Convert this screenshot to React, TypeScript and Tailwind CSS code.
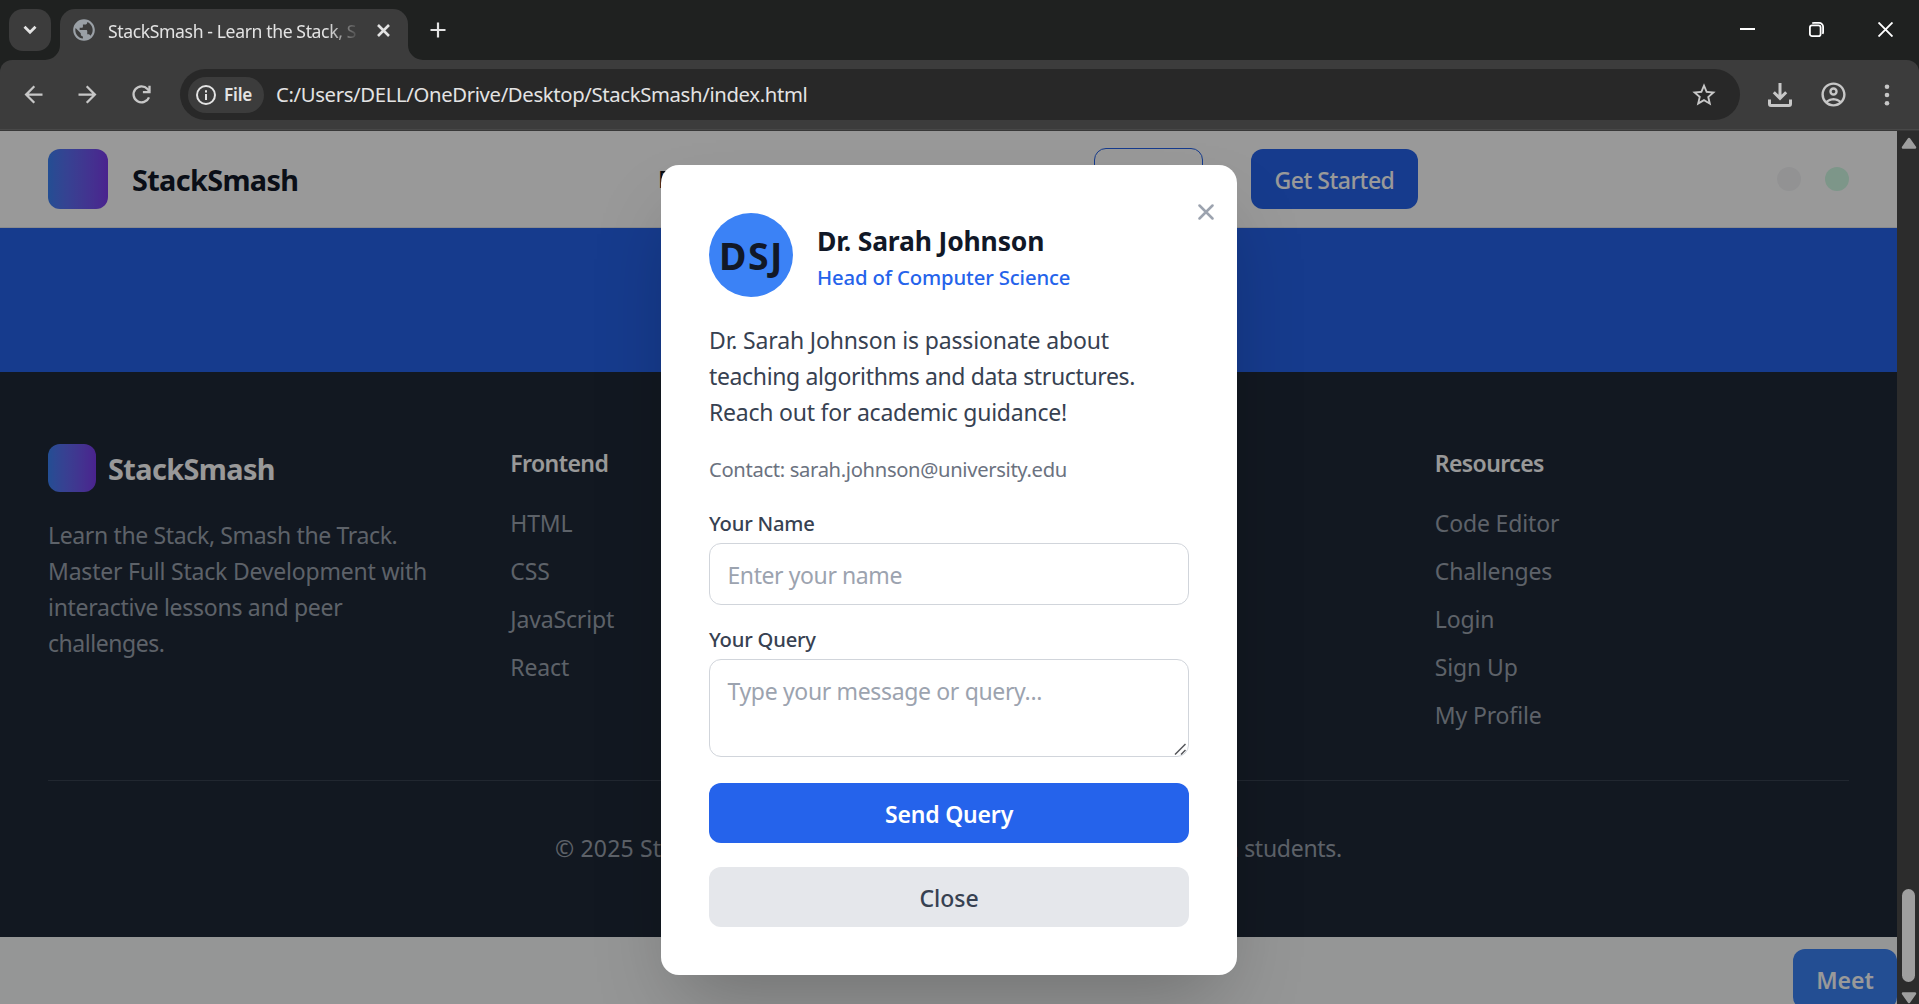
import type { ReactNode } from 'react';
import { MdArrowBack, MdArrowForward, MdOutlineAccountCircle, MdPublic, MdStarBorder } from 'react-icons/md';

function TabStrip() {
  return (
    <div className="flex h-[60px] shrink-0 bg-[#1f2120] text-[#e3e3e3]">
      <button className="mt-[9px] ml-[9px] flex size-[42px] items-center justify-center rounded-[14px] bg-[#3c3c3c]">
        <svg width="14" height="10" viewBox="0 0 14 10" fill="none" stroke="currentColor" strokeWidth="2.8">
          <path d="M1.5 1.8 7 7.2l5.500-5.400" />
        </svg>
      </button>
      <div className="relative mt-[9px] ml-[9px] flex h-[51px] w-[348px] items-center rounded-t-[15px] bg-[#3c3c3c]">
        <svg className="absolute bottom-0 -left-[15px]" width="15" height="15" fill="#3c3c3c">
          <path d="M15 0v15H0A15 15 0 0 0 15 0z" />
        </svg>
        <svg className="absolute -right-[15px] bottom-0" width="15" height="15" fill="#3c3c3c">
          <path d="M0 0v15h15A15 15 0 0 1 0 0z" />
        </svg>
        <MdPublic className="mb-[9px] ml-[11px] size-[26px] text-[#9aa0a6]" />
        <span className="mb-[6px] ml-[11px] w-[250px] text-[17.600px] tracking-[-0.022em] whitespace-nowrap [mask-image:linear-gradient(to_right,black_220px,transparent_252px)]">
          StackSmash - Learn the Stack, S
        </span>
        <svg className="mb-[9px] ml-[19px]" width="13" height="13" viewBox="0 0 13 13" stroke="currentColor" strokeWidth="2.6">
          <path d="m1 1 11 11M12 1 1 12" />
        </svg>
      </div>
      <svg className="mt-[22px] ml-[22px]" width="16" height="16" stroke="currentColor" strokeWidth="2.200">
        <path d="M8 .5v15M.5 8h15" />
      </svg>
      <div className="mt-[22px] mr-[26px] ml-auto flex gap-[54px] text-white">
        <svg width="15" height="15" fill="currentColor">
          <path d="M0 6h15v2H0z" />
        </svg>
        <svg width="15" height="15" fill="none" stroke="currentColor" strokeWidth="1.800">
          <rect x=".9" y="3.400" width="10.700" height="10.700" rx="2.200" />
          <path d="M3.200 1.300Q4 .9 5 .9h5.200a3.900 3.900 0 0 1 3.900 3.900V10q0 1-.5 1.900" />
        </svg>
        <svg width="15" height="15" stroke="currentColor" strokeWidth="1.900">
          <path d="m.5.5 14 14M14.500.5l-14 14" />
        </svg>
      </div>
    </div>
  );
}

function Toolbar() {
  return (
    <div className="h-[71px] shrink-0 bg-[#1f2120]">
      <div className="flex h-full items-start rounded-t-[12px] border-b border-[#383838] bg-[#3c3c3c] text-[#c7c7c7]">
        <div className="flex h-[70px] w-full items-start border-b border-[#484848] pt-[9px]">
          <div className="flex h-[51px] items-center gap-[27px] pl-[19.500px]">
            <MdArrowBack className="size-[27px]" />
            <MdArrowForward className="size-[27px]" />
            {/* Reload: open ring with a square-cornered arrow head */}
            <svg width="27" height="27" viewBox="0 0 27 27" fill="none" stroke="currentColor" strokeWidth="2.300">
              <path d="M21 16.300A8 8 0 1 1 19.500 8l2 2.200" />
              <path d="M21.500 4.700v6.500h-6.600" />
            </svg>
          </div>
          <div className="ml-[25.500px] flex h-[51px] w-[1560px] items-center rounded-full bg-[#282828] pr-[22px] pl-2 text-[#e3e3e3]">
            <div className="flex h-9 w-[76px] items-center rounded-full bg-[#3c3c3c] pl-2">
              <svg width="20" height="20" fill="none" stroke="currentColor" strokeWidth="2">
                <circle cx="10" cy="10" r="9" />
                <path d="M10 9v6M10 5.200v2.200" />
              </svg>
              <span className="ml-2 text-[17.100px] leading-[22px] font-semibold tracking-[-0.01em]">File</span>
            </div>
            <span className="ml-[12px] text-[20.300px] tracking-[-0.017em]">
              C:/Users/DELL/OneDrive/Desktop/StackSmash/index.html
            </span>
            <MdStarBorder className="ml-auto size-[28px] text-[#c7c7c7]" />
          </div>
          <div className="ml-7 flex h-[51px] items-center">
            <svg width="24" height="24" fill="none" stroke="currentColor" strokeWidth="3">
              <path d="M12 0v15M5.800 9.200 12 15.300l6.200-6.100M1.500 16.500v4.500q0 1.500 1.500 1.500h18q1.500 0 1.500-1.500v-4.500" />
            </svg>
            <MdOutlineAccountCircle className="ml-[26.500px] size-[29px]" />
            <svg className="ml-[36.500px]" width="6" height="22" fill="currentColor">
              <circle cx="3" cy="2.700" r="2.300" />
              <circle cx="3" cy="11" r="2.300" />
              <circle cx="3" cy="19.300" r="2.300" />
            </svg>
          </div>
        </div>
      </div>
    </div>
  );
}

function SiteHeader() {
  return (
    <header className="flex h-[97px] shrink-0 items-center border-b border-gray-200 bg-white px-12">
      <div className="size-[60px] rounded-xl bg-linear-to-r from-[#3b82f6] to-[#7c3aed]" />
      <span className="ml-6 w-[526px] pt-[2px] text-[28.800px] font-bold tracking-[-0.022em] text-[#111827]">StackSmash</span>
      <nav className="w-[388px] pt-px text-[23.200px] font-medium text-[#111827]">Features</nav>
      <div className="ml-12 h-[63px] w-[109px] rounded-xl border border-[#2563eb]" />
      <button className="ml-12 h-[60px] w-[167px] rounded-xl bg-[#2563eb] pt-[3px] text-[23px] font-medium tracking-[-0.022em] text-white">
        Get Started
      </button>
      <div className="ml-auto flex gap-6">
        <span className="size-6 rounded-full bg-[#f3f4f6]" />
        <span className="size-6 rounded-full bg-[#d1fae5]" />
      </div>
    </header>
  );
}

function LinkColumn({ title, links }: { title: string; links: string[] }) {
  return (
    <div className="pt-px">
      <h4 className="text-[23px] leading-9 font-semibold tracking-[-0.025em] text-white">{title}</h4>
      <ul className="mt-6 space-y-3 text-[23px] leading-9 tracking-[-0.006em]">
        {links.map((link) => (
          <li key={link}>{link}</li>
        ))}
      </ul>
    </div>
  );
}

function SiteFooter() {
  return (
    <footer className="h-[565px] shrink-0 bg-[#1f2937] px-12 pt-[72px] text-[#9ca3af]">
      <div className="grid h-[336px] grid-cols-4 gap-12">
        <div>
          <div className="flex h-12 items-center gap-3">
            <div className="size-12 rounded-xl bg-linear-to-r from-[#3b82f6] to-[#7c3aed]" />
            <span className="pt-[2px] text-[28.800px] font-bold tracking-[-0.020em] text-white">StackSmash</span>
          </div>
          <p className="mt-[25px] text-[23px] leading-9">
            <span className="block tracking-[-0.0155em]">Learn the Stack, Smash the Track.</span>
            <span className="block tracking-[-0.009em]">Master Full Stack Development with</span>
            <span className="block tracking-[-0.012em]">interactive lessons and peer</span>
            <span className="block tracking-[-0.020em]">challenges.</span>
          </p>
        </div>
        <LinkColumn title="Frontend" links={['HTML', 'CSS', 'JavaScript', 'React']} />
        <div />
        <LinkColumn title="Resources" links={['Code Editor', 'Challenges', 'Login', 'Sign Up', 'My Profile']} />
      </div>
      <div className="border-t border-[#374151] pt-[49px]">
        <div className="mx-auto flex w-[787px] justify-between text-[23px] leading-9 tracking-[-0.012em]">
          <span className="tracking-[0.008em]">© 2025 StackSmash.</span>
          <span>Built by and for Indian students.</span>
        </div>
      </div>
    </footer>
  );
}

function Field({ label, className, children }: { label: string; className: string; children: ReactNode }) {
  return (
    <label className={className}>
      <span className="block text-[20.200px] leading-[30px] font-medium tracking-[-0.010em] text-[#374151]">{label}</span>
      {children}
    </label>
  );
}

function ContactDialog() {
  return (
    <div className="absolute inset-x-0 top-0 -bottom-[5px] flex items-center justify-center bg-black/40">
      <div className="relative ml-px h-[810px] w-[576px] rounded-[18px] bg-white p-12 text-[#111827] shadow-[0_37.5px_75px_-18px_rgba(0,0,0,0.250)]">
        <svg className="absolute top-[38.500px] right-[23px]" width="16" height="16" stroke="#9ca3af" strokeWidth="2.500" strokeLinecap="round">
          <path d="m1.500 1.500 13 13M14.500 1.500l-13 13" />
        </svg>
        <div className="flex h-[84px] gap-6">
          <div className="flex size-[84px] items-center justify-center rounded-full bg-[#3b82f6] pt-[2px] pl-px text-[37.500px] font-bold tracking-[0.040em]">
            DSJ
          </div>
          <div className="pt-[10px]">
            <h3 className="text-[26.500px] leading-9 font-bold tracking-[-0.006em]">Dr. Sarah Johnson</h3>
            <p className="pt-px text-[20.300px] leading-[35px] font-medium tracking-[-0.007em] text-[#2563eb]">Head of Computer Science</p>
          </div>
        </div>
        <p className="mt-[25px] text-[23px] leading-9 text-[#374151]">
          <span className="block tracking-[-0.007em]">Dr. Sarah Johnson is passionate about</span>
          <span className="block tracking-[-0.0155em]">teaching algorithms and data structures.</span>
          <span className="block tracking-[-0.010em]">Reach out for academic guidance!</span>
        </p>
        <p className="mt-6 text-[20.200px] leading-[30px] tracking-[-0.0165em] text-[#6b7280]">
          Contact: sarah.johnson@university.edu
        </p>
        <Field label="Your Name" className="mt-6 block">
          <span className="mt-[5px] flex h-[62px] items-center rounded-xl border border-[#d1d5db] pt-[2px] pl-[17.500px] text-[23px] tracking-[-0.018em] text-[#9ca3af]">
            Enter your name
          </span>
        </Field>
        <Field label="Your Query" className="mt-[19px] block">
          <span className="relative mt-[5px] block h-[98px] rounded-xl border border-[#d1d5db] pt-[13px] pl-[17.500px] text-[23px] leading-9 tracking-[-0.015em] text-[#9ca3af]">
            Type your message or query...
            <svg className="absolute right-[2px] bottom-px" width="12" height="12" stroke="#55575b" strokeWidth="1.500">
              <path d="M1 11.500 11.500 1M7 11.500l4.500-4.500" />
            </svg>
          </span>
        </Field>
        <button className="mt-[26px] block h-[60px] w-full rounded-xl bg-[#2563eb] pt-[2px] text-[23px] font-semibold tracking-[-0.008em] text-white">
          Send Query
        </button>
        <button className="mt-6 block h-[60px] w-full rounded-xl bg-[#e5e7eb] pt-[2px] text-[23px] font-medium text-[#374151]">
          Close
        </button>
      </div>
    </div>
  );
}

function Scrollbar() {
  return (
    <div className="flex w-[22px] shrink-0 flex-col items-center bg-[#2c2c2c] pt-[6px] text-[#9f9f9f]">
      <svg className="ml-px" width="16" height="12" fill="currentColor" stroke="currentColor" strokeWidth="2.500" strokeLinejoin="round">
        <path d="M8 2 14 10.500H2z" />
      </svg>
      <div className="mt-[740px] ml-px h-[93px] w-[13px] shrink-0 rounded-full bg-[#9f9f9f]" />
      <svg className="mt-[10px] ml-px" width="16" height="12" fill="currentColor" stroke="currentColor" strokeWidth="2.500" strokeLinejoin="round">
        <path d="M8 10 14 1.500H2z" />
      </svg>
    </div>
  );
}

export default function App() {
  return (
    <div className="flex h-[1004px] w-[1919px] flex-col overflow-hidden font-['Noto_Sans','Open_Sans',sans-serif]">
      <TabStrip />
      <Toolbar />
      <div className="flex h-[873px]">
        <main className="relative flex h-full w-[1897px] flex-col overflow-hidden bg-[#f9fafb]">
          <SiteHeader />
          <div className="h-36 shrink-0 bg-[#2563eb]" />
          <SiteFooter />
          <button className="mt-3 h-[60px] w-[104px] shrink-0 self-end rounded-xl bg-[#3b82f6] pt-[2px] text-[23px] font-semibold text-white">
            Meet
          </button>
          <ContactDialog />
        </main>
        <Scrollbar />
      </div>
    </div>
  );
}
